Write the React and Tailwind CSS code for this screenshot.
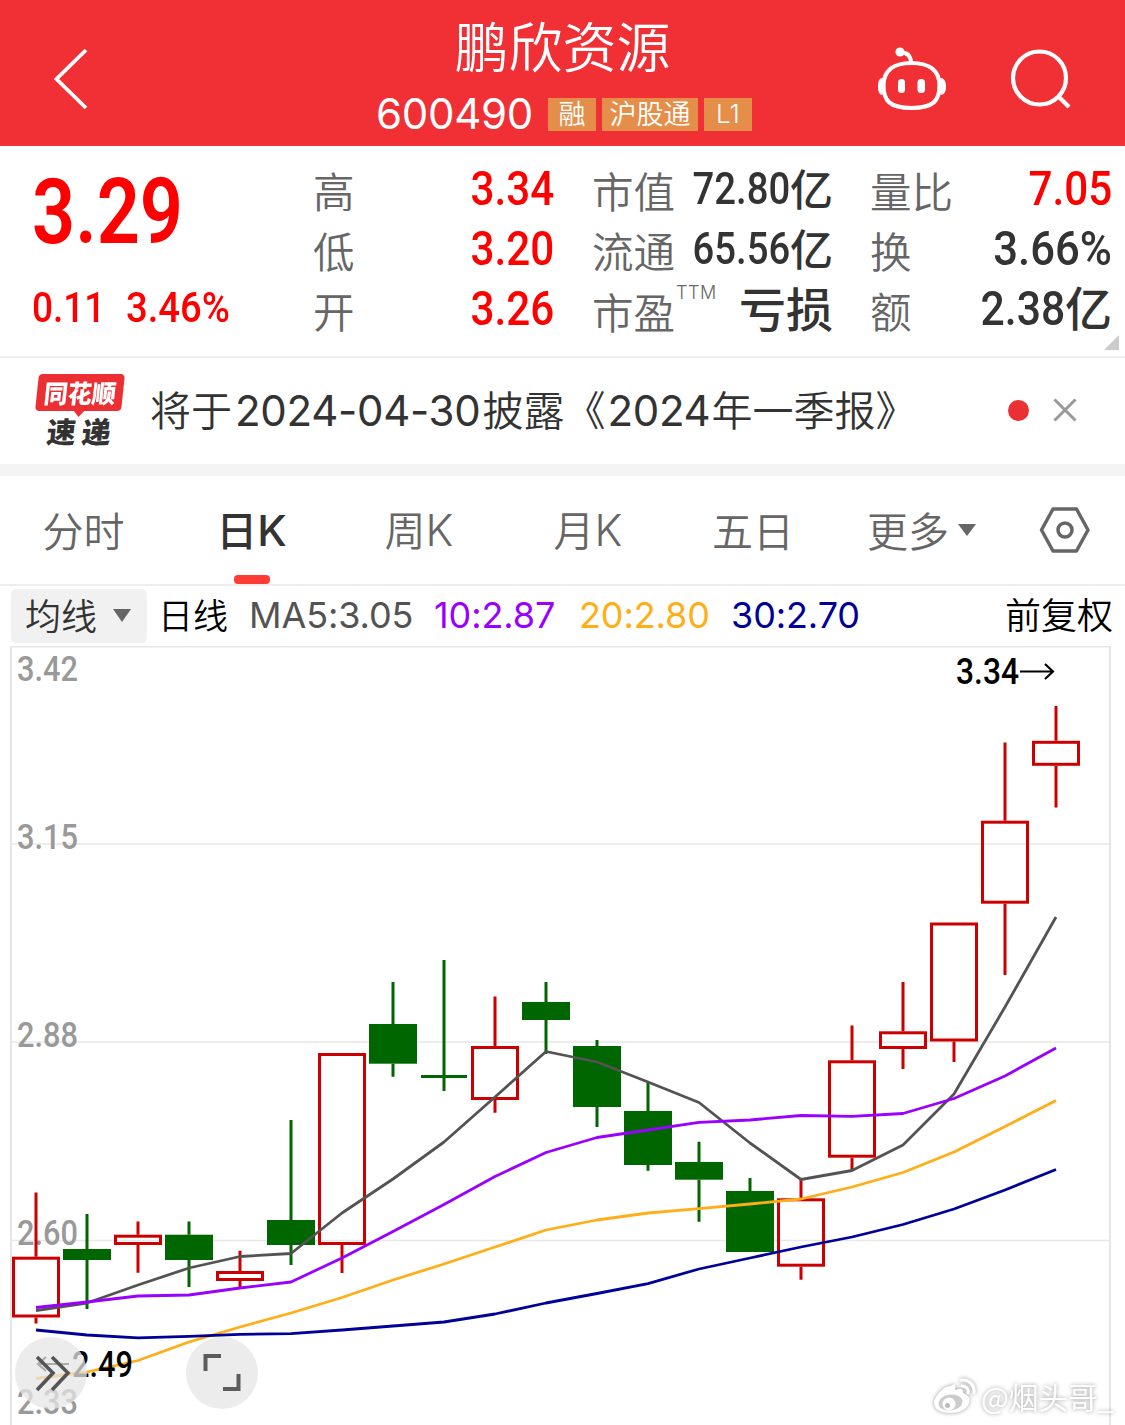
import React from 'react';

const candles = [
  // x, body top, body bottom, wick top, wick bottom
  { x: 36, top: 1256.7, bottom: 1317.5, high: 1192.5, low: 1323.5, up: true },
  { x: 87, top: 1249, bottom: 1260, high: 1214, low: 1309, up: false },
  { x: 138, top: 1234.7, bottom: 1245, high: 1221.5, low: 1272.7, up: true },
  { x: 189, top: 1234.7, bottom: 1260, high: 1221.5, low: 1287, up: false },
  { x: 240, top: 1271, bottom: 1281, high: 1250.7, low: 1287, up: true },
  { x: 291, top: 1220, bottom: 1245, high: 1120, low: 1265, up: false },
  { x: 342, top: 1053, bottom: 1245, high: 1053, low: 1273, up: true },
  { x: 393, top: 1024, bottom: 1063.7, high: 982, low: 1076.7, up: false },
  { x: 444, top: 1075, bottom: 1078, high: 960, low: 1091, up: false },
  { x: 495, top: 1046, bottom: 1100, high: 996.5, low: 1112.7, up: true },
  { x: 546, top: 1002, bottom: 1020, high: 982, low: 1054, up: false },
  { x: 597, top: 1046, bottom: 1107, high: 1040, low: 1127, up: false },
  { x: 648, top: 1111, bottom: 1165, high: 1083, low: 1170.7, up: false },
  { x: 699, top: 1162, bottom: 1179.7, high: 1141.7, low: 1221.7, up: false },
  { x: 750, top: 1191, bottom: 1252, high: 1178, low: 1252, up: false },
  { x: 801, top: 1198.3, bottom: 1266.7, high: 1179.5, low: 1279.7, up: true },
  { x: 852, top: 1060.3, bottom: 1157.7, high: 1025.5, low: 1170, up: true },
  { x: 903, top: 1031.3, bottom: 1049, high: 982, low: 1069, up: true },
  { x: 954, top: 922.5, bottom: 1041.5, high: 922.5, low: 1062, up: true },
  { x: 1005, top: 820.7, bottom: 903.7, high: 742.5, low: 975, up: true },
  { x: 1056, top: 740.8, bottom: 765.8, high: 706, low: 807.5, up: true },
];

const averages = [
  {
    color: '#535353',
    values: [
      1310.5, 1303, 1285, 1268, 1256.5, 1253.5, 1213, 1179, 1142, 1097, 1051.5,
      1062, 1082, 1102.5, 1143, 1179.5, 1170.5, 1145, 1094, 1007, 917,
    ],
  },
  {
    color: '#9900ff',
    values: [
      1307.5, 1302, 1296, 1295, 1288, 1282, 1258, 1231.5, 1204.5, 1176.5,
      1152.5, 1137.5, 1130, 1122.3, 1120, 1115.5, 1116.3, 1113.5, 1098.5, 1076,
      1048,
    ],
  },
  {
    color: '#ffae17',
    values: [
      1378.5, 1372, 1360.5, 1342, 1327, 1313, 1297.5, 1280, 1264, 1247, 1230,
      1220, 1213, 1208.7, 1204, 1199, 1187, 1172.5, 1152, 1126.5, 1100.5,
    ],
  },
  {
    color: '#000099',
    values: [
      1330, 1335, 1337.8, 1336.3, 1334.3, 1333.7, 1330, 1326, 1322, 1314, 1303,
      1293.5, 1283.7, 1269, 1258, 1247, 1237, 1224.5, 1209, 1190, 1169.5,
    ],
  },
];

const axisLabels = [
  { text: '3.42', y: 681 },
  { text: '3.15', y: 849 },
  { text: '2.88', y: 1047 },
  { text: '2.60', y: 1245 },
  { text: '2.33', y: 1414 },
];

const tabs = [
  { name: '分时', width: 'w-[167px]' },
  { name: '日K', width: 'w-[169px]', active: true },
  { name: '周K', width: 'w-[166px]' },
  { name: '月K', width: 'w-[172px]' },
  { name: '五日', width: 'w-[158px]' },
];

// 窄体数字
function Num({ children, className = '' }) {
  return (
    <span
      className={`inline-block font-['Roboto'] whitespace-nowrap ${className}`}
    >
      {children}
    </span>
  );
}

function StatRow({ label, sup, children }) {
  return (
    <div className="flex h-[60px] items-center justify-between">
      <span
        className={`flex text-[41.500px] leading-[48px] font-[350] text-[#666] ${
          sup ? 'mt-[2px]' : '-mt-[1px]'
        }`}
      >
        {label}
        {sup && (
          <span className="ml-[1px] -mt-[18px] text-[18px] font-['Inter',sans-serif] tracking-[0.5px]">
            {sup}
          </span>
        )}
      </span>
      <span className="-mt-[2px] flex items-center leading-[48px]">
        {children}
      </span>
    </div>
  );
}

function Header() {
  return (
    <header className="flex h-[146px] bg-[#f03035] text-white">
      <div className="w-[340px] pt-[48px] pl-[52px]">
        <svg width="36" height="62" viewBox="0 0 36 62" fill="none">
          <path d="M34 2 4.500 31 34 60" stroke="white" strokeWidth="3.800" />
        </svg>
      </div>
      <div className="flex w-[445px] flex-col items-center">
        <h1 className="mt-[15px] text-[54px] leading-[60px] font-[350]">
          鹏欣资源
        </h1>
        <div className="mt-[18px] ml-[3px] flex h-[42px] items-center gap-[6px] text-[27px] font-[350]">
          <span className="-mt-[2px] mr-[9px] font-['Inter'] text-[42px] font-normal tracking-[-0.3px]">
            600490
          </span>
          <span className="flex h-[33px] w-[48px] items-center justify-center bg-[#e58e49] pb-[2px]">
            融
          </span>
          <span className="flex h-[33px] w-[96px] items-center justify-center bg-[#e58e49] pb-[2px]">
            沪股通
          </span>
          <span className="flex h-[33px] w-[48px] items-center justify-center bg-[#e58e49] pb-[1px] font-['Inter'] text-[26px]">
            L1
          </span>
        </div>
      </div>
      <div className="flex gap-[60px] pt-[46px] pl-[91px]">
        <svg width="72" height="66" viewBox="0 0 72 66" fill="none">
          <circle cx="24" cy="6" r="4.600" fill="white" />
          <path d="M25 6.500c6 0 9.500 3 10 9.500" stroke="white" strokeWidth="4" />
          <path
            d="M35.500 17C16 17 7.500 26 7.500 39.500c0 15 6 22.500 28 22.500s28-7.500 28-22.500C63.500 26 55 17 35.500 17Z"
            stroke="white"
            strokeWidth="4.200"
          />
          <path
            d="M6.500 32C3.500 32 2 35 2 40.500S3.500 49 6.500 49ZM64.500 32c3.500 0 5.500 3 5.500 8.500S68 49 64.500 49Z"
            fill="white"
          />
          <rect x="22" y="33" width="7" height="14" rx="3.500" fill="white" />
          <rect x="41.500" y="33" width="7.500" height="14" rx="3.500" fill="white" />
        </svg>
        <svg
          width="64"
          height="66"
          viewBox="0 0 64 66"
          fill="none"
          stroke="white"
          strokeWidth="4.200"
        >
          <circle cx="31.500" cy="32" r="26.500" />
          <path d="m50 50 11 11" />
        </svg>
      </div>
    </header>
  );
}

function Quote() {
  return (
    <section className="relative flex h-[212px] border-b-2 border-[#eee] pt-[14px]">
      <div className="w-[313px] pl-[32px] font-medium text-[#ff0000]">
        <Num className="mt-[8px] origin-left scale-x-[0.84] text-[90px] leading-[90px] font-semibold">
          3.29
        </Num>
        <div className="mt-[29px] flex text-[42px] leading-[42px]">
          <Num className="w-[94px] origin-left scale-x-[0.88]">0.11</Num>
          <Num className="origin-left scale-x-[0.91]">3.46%</Num>
        </div>
      </div>
      <div className="w-[241px] font-medium">
        <StatRow label="高">
          <Num className="origin-right scale-x-[0.87] text-[48.500px] text-[#ff0000]">
            3.34
          </Num>
        </StatRow>
        <StatRow label="低">
          <Num className="origin-right scale-x-[0.87] text-[48.500px] text-[#ff0000]">
            3.20
          </Num>
        </StatRow>
        <StatRow label="开">
          <Num className="origin-right scale-x-[0.87] text-[48.500px] text-[#ff0000]">
            3.26
          </Num>
        </StatRow>
      </div>
      <div className="ml-[38px] w-[241px] font-medium text-[#333]">
        <StatRow label="市值">
          <Num className="origin-right scale-x-[0.87] text-[44px]">72.80</Num>
          <span className="-mt-[5px] text-[43px]">亿</span>
        </StatRow>
        <StatRow label="流通">
          <Num className="origin-right scale-x-[0.87] text-[44px]">65.56</Num>
          <span className="-mt-[5px] text-[43px]">亿</span>
        </StatRow>
        <StatRow label="市盈" sup="TTM">
          <span className="-mt-[5px] text-[47px]">亏损</span>
        </StatRow>
      </div>
      <div className="ml-[37px] w-[242px] font-medium text-[#333]">
        <StatRow label="量比">
          <Num className="origin-right scale-x-[0.87] text-[48.500px] text-[#ff0000]">
            7.05
          </Num>
        </StatRow>
        <StatRow label="换">
          <Num className="origin-right scale-x-[0.9] text-[48.500px]">
            3.66%
          </Num>
        </StatRow>
        <StatRow label="额">
          <Num className="origin-right scale-x-[0.88] text-[48.500px]">
            2.38
          </Num>
          <span className="-mt-[6px] text-[47px]">亿</span>
        </StatRow>
      </div>
      <svg
        className="absolute right-[6px] bottom-[6px]"
        width="15"
        height="15"
        viewBox="0 0 15 15"
      >
        <path d="M15 0v15H0Z" fill="#ccc" />
      </svg>
    </section>
  );
}

function News() {
  return (
    <section className="flex h-[118px] items-center border-b-12 border-[#f4f4f4]">
      <div className="-mt-[4px] ml-[37px] flex w-[113px] flex-col">
        <div className="relative flex h-[37px] w-[86px] -skew-x-6 items-center justify-center rounded-[4px] bg-[#ec2f33] text-[24px] font-black text-white">
          <span className="-mt-[2px] scale-y-105">同花顺</span>
          <svg
            className="absolute top-[36px] left-[38px]"
            width="12"
            height="7"
            viewBox="0 0 12 7"
          >
            <path d="M0 0h12L6 7Z" fill="#ec2f33" />
          </svg>
        </div>
        <div className="mt-[4px] ml-[10px] -skew-x-6 text-[29px] leading-[30px] font-black tracking-[6px] text-[#333]">
          速递
        </div>
      </div>
      <p className="-mt-[3px] w-[858px] text-[41px] font-[350] whitespace-nowrap text-[#333]">
        将于
        <span className="mr-[2px] ml-[3px] font-['Inter'] text-[42px] font-normal tracking-[-0.300px]">
          2024-04-30
        </span>
        披露《
        <span className="mr-[1px] ml-[2px] font-['Inter'] text-[42px] font-normal tracking-[-0.300px]">
          2024
        </span>
        年一季报》
      </p>
      <span className="-mt-[1px] h-[21px] w-[21px] rounded-full bg-[#eb3033]" />
      <svg
        className="-mt-[2px] ml-[24px]"
        width="24"
        height="24"
        viewBox="0 0 24 24"
        stroke="#999"
        strokeWidth="3"
      >
        <path d="m1.500 1.500 21 21M22.500 1.500l-21 21" />
      </svg>
    </section>
  );
}

function Tabs() {
  return (
    <nav className="flex h-[110px] border-b-2 border-[#eee] text-[41px] font-[350] text-[#666]">
      {tabs.map((tab) => (
        <div
          key={tab.name}
          className={`relative flex items-center justify-center ${tab.width} ${
            tab.active ? 'font-medium text-[#333]' : ''
          }`}
        >
          <span>
            {tab.name.replace('K', '')}
            {tab.name.endsWith('K') && (
              <span
                className={`font-['Inter'] text-[43px] ${
                  tab.active ? 'font-medium' : 'font-[350]'
                }`}
              >
                K
              </span>
            )}
          </span>
          {tab.active && (
            <span className="absolute bottom-0 left-[67px] h-[9px] w-[36px] rounded-[4px] bg-[#ff3b33]" />
          )}
        </div>
      ))}
      <div className="ml-[35px] flex w-[172px] items-center gap-[9px]">
        <span>更多</span>
        <svg width="18" height="14" viewBox="0 0 18 14">
          <path d="M0 1h18L9 13Z" fill="#666" />
        </svg>
      </div>
      <svg
        className="self-center"
        width="52"
        height="48"
        viewBox="0 0 52 48"
        fill="none"
        stroke="#666"
        strokeWidth="3.500"
      >
        <path
          d="M14 3h23.500l11.500 21-11.500 21H14L2.500 24Z"
          strokeLinejoin="round"
        />
        <circle cx="26" cy="24" r="7" />
      </svg>
    </nav>
  );
}

function AverageBar() {
  return (
    <div className="flex h-[60px] items-center pt-[1px] pr-[12px] pl-[11px] text-[36px] font-[350] whitespace-nowrap">
      <div className="-mt-[2px] flex h-[54px] w-[136px] items-center rounded-[5px] bg-[#f1f1f1] pl-[14px] text-[#333]">
        <span className="-mt-[4px]">均线</span>
        <svg className="ml-[16px]" width="18" height="14" viewBox="0 0 18 14">
          <path d="M0 0h18L9 13Z" fill="#666" />
        </svg>
      </div>
      <span className="-mt-[5px] ml-[11px] w-[91px] text-[35px] text-black">
        日线
      </span>
      <div className="-mt-[3px] flex font-['Inter'] text-[36px] font-normal tracking-[-0.100px]">
        <span className="w-[185px] text-[#535353]">MA5:3.05</span>
        <span className="w-[145px] text-[#9900ff]">10:2.87</span>
        <span className="w-[152px] text-[#ffae17]">20:2.80</span>
        <span className="text-[#000099]">30:2.70</span>
      </div>
      <span className="-mt-[7px] ml-auto text-black">前复权</span>
    </div>
  );
}

function Chart() {
  return (
    <div className="relative h-[779px]">
      <svg
        className="block"
        width="1125"
        height="779"
        viewBox="0 646 1125 779"
        fill="none"
      >
        <path
          d="M11 1425V646.500H1110V1425"
          stroke="#e6e6e6"
          strokeWidth="2"
        />
        <path
          d="M12 844H1109M12 1042H1109M12 1240.500H1109"
          stroke="#e8e8e8"
          strokeWidth="1.500"
        />
        {axisLabels.map((label) => (
          <text
            key={label.text}
            x="17"
            y={label.y}
            textLength="61"
            lengthAdjust="spacingAndGlyphs"
            fill="#999"
            className="font-['Roboto'] text-[35px] font-medium"
          >
            {label.text}
          </text>
        ))}
        {candles.map((c) => {
          const color = c.up ? '#cc0000' : '#006600';
          return (
            <g key={c.x} stroke={color} strokeWidth="3">
              <path d={`M${c.x} ${c.high}V${c.top}M${c.x} ${c.bottom}V${c.low}`} />
              {c.up ? (
                <rect
                  x={c.x - 22.5}
                  y={c.top + 1.5}
                  width="45"
                  height={c.bottom - c.top - 3}
                />
              ) : (
                <rect
                  x={c.bottom - c.top < 4 ? c.x - 23 : c.x - 24}
                  y={c.top}
                  width={c.bottom - c.top < 4 ? 46 : 48}
                  height={c.bottom - c.top}
                  fill={color}
                  stroke="none"
                />
              )}
            </g>
          );
        })}
        {averages.map((line) => (
          <polyline
            key={line.color}
            points={line.values.map((y, i) => `${36 + i * 51},${y}`).join(' ')}
            stroke={line.color}
            strokeWidth="2.800"
            strokeLinejoin="round"
          />
        ))}
        <text
          x="956"
          y="684"
          textLength="63"
          lengthAdjust="spacingAndGlyphs"
          fill="black"
          className="font-['Roboto'] text-[36px] font-medium"
        >
          3.34
        </text>
        <path
          d="M1020 671.500h33M1045 664l8 7.500-8 7.500"
          stroke="black"
          strokeWidth="2.200"
        />
        <text
          x="72"
          y="1377"
          textLength="61"
          lengthAdjust="spacingAndGlyphs"
          fill="black"
          className="font-['Roboto'] text-[36px] font-medium"
        >
          2.49
        </text>
        <path
          d="M69 1364H38M46 1357l-8 7 8 7"
          stroke="black"
          strokeWidth="2.200"
        />
        <circle cx="51" cy="1373" r="36" fill="#e6e6e6" fillOpacity="0.75" />
        <path
          d="m37 1357 16 16-16 17M52 1357l16 16-16 17"
          stroke="#555"
          strokeWidth="3.600"
        />
        <circle cx="222" cy="1373" r="36" fill="#ececec" />
        <path
          d="M205.500 1371v-15H221M223 1389h15.500v-15"
          stroke="#5c5c5c"
          strokeWidth="4"
        />
      </svg>
      <div className="absolute right-[11px] bottom-[9px] flex items-center text-[29.500px] leading-[40px] text-white [filter:drop-shadow(0_0_2px_#999)]">
        <svg
          className="mt-[2px] mr-[4px]"
          width="44"
          height="38"
          viewBox="0 0 44 38"
          fill="none"
        >
          <path
            d="M18 8c3-3 6-1 4 4 5-2 9-1 8 3 5 2 8 5 6 10-2 6-9 10-18 10C9 35 1 32 1 25 1 19 11 7 18 8Z"
            fill="white"
          />
          <ellipse
            cx="17.500"
            cy="24.500"
            rx="12"
            ry="8"
            transform="rotate(-8 17.500 24.500)"
            fill="#ccc"
          />
          <circle cx="16" cy="26" r="6.500" fill="white" />
          <circle cx="14.500" cy="27.500" r="2.500" fill="#bbb" />
          <path
            d="M28 2c8-1 14 5 13 13M29 8c4 0 7 3 6 7"
            stroke="white"
            strokeWidth="3"
            strokeLinecap="round"
          />
        </svg>
        <span>@烟头哥_</span>
      </div>
    </div>
  );
}

function App() {
  return (
    <div className="h-[1425px] w-[1125px] overflow-hidden bg-white font-['Noto_Sans_CJK_SC',sans-serif]">
      <Header />
      <Quote />
      <News />
      <Tabs />
      <AverageBar />
      <Chart />
    </div>
  );
}

export default App;
